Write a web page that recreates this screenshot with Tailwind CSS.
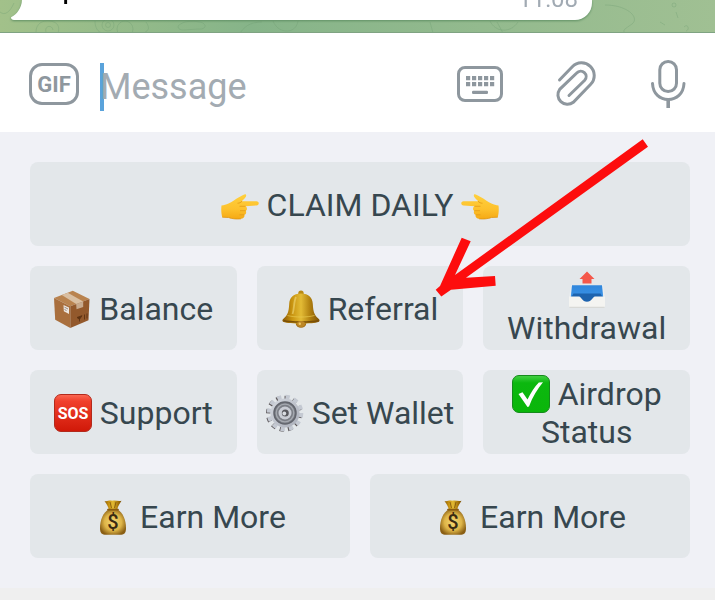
<!DOCTYPE html>
<html lang="en">
<head>
    <meta charset="UTF-8">
    <meta name="viewport" content="width=device-width, initial-scale=1.0">
    <title>Bot chat</title>
    <script src="https://cdn.jsdelivr.net/npm/@tailwindcss/browser@4"></script>
</head>
<body class="relative min-h-screen overflow-x-hidden bg-[#efefef] font-['Roboto',sans-serif]">

    <!-- Shared emoji drawings -->
    <svg class="absolute size-0" aria-hidden="true">
        <defs>
            <linearGradient id="skin" x1="0" y1="0" x2="0" y2="1"><stop offset="0" stop-color="#ffd03d"/><stop offset=".6" stop-color="#fdc12c"/><stop offset="1" stop-color="#f5a914"/></linearGradient>
            <linearGradient id="gold" x1="0" x2="1"><stop offset="0" stop-color="#8a5a08"/><stop offset=".25" stop-color="#c7920f"/><stop offset=".5" stop-color="#e3bb35"/><stop offset=".75" stop-color="#b07f0e"/><stop offset="1" stop-color="#7c5008"/></linearGradient>
            <linearGradient id="red" x1="0" y1="0" x2="0" y2="1"><stop offset="0" stop-color="#fb6a55"/><stop offset=".18" stop-color="#f0402c"/><stop offset="1" stop-color="#d01808"/></linearGradient>
            <linearGradient id="green" x1="0" y1="0" x2="0" y2="1"><stop offset="0" stop-color="#43d043"/><stop offset=".2" stop-color="#0cb80f"/><stop offset="1" stop-color="#0ab60a"/></linearGradient>
            <linearGradient id="blue" x1="0" y1="0" x2="0" y2="1"><stop offset="0" stop-color="#2f86dc"/><stop offset="1" stop-color="#3f97ea"/></linearGradient>
            <radialGradient id="bag" cx=".5" cy=".5" r=".55"><stop offset="0" stop-color="#f5d873"/><stop offset=".6" stop-color="#deb548"/><stop offset="1" stop-color="#8a5f14"/></radialGradient>
            <linearGradient id="steel" x1="0" y1="0" x2="1" y2="1"><stop offset="0" stop-color="#d5d9e0"/><stop offset="1" stop-color="#a9adb8"/></linearGradient>
        </defs>
        <symbol id="hand" viewBox="0 0 38 38">
            <path d="M.5 19.5C3 19 5 18.600 7.500 17.500C11 16 14 13.500 17.500 11.500C20 10.200 22.500 8.500 24 8.300C25.500 8.300 25.500 10 24.500 11.300C23.300 13 21.700 14.200 21 15.200L35.500 15.200C38.500 15.300 38.500 19.300 35.500 19.400L24.500 20.300C26.500 21.500 26.300 24 24.700 24.700C25.700 26.500 25 28.400 23.300 28.800C24 31 22.500 32.700 20 32.800C15 33.300 11 32.800 7.500 31.500L1.300 31.200C.2 28 0 23 .5 19.500Z" fill="url(#skin)"/>
            <path d="M24.500 20.300H18.500M24.700 24.700H19M23.300 28.800H18.500" fill="none" stroke="#e59a16" stroke-width=".8"/>
            <path d="M21 15.200C19.500 16.800 18 17.200 16.500 17.200M1.300 31.200L7.500 31.500C11 32.800 15 33.300 20 32.800" fill="none" stroke="#e09410" stroke-width=".8"/>
        </symbol>
        <symbol id="box" viewBox="0 0 38 38">
            <path d="M19.800 .8L1 8L17.300 16.200L36.500 9Z" fill="#b9834f"/>
            <path d="M1 8L17.300 16.200V38L2.200 29.700Z" fill="#a96f3d"/>
            <path d="M17.300 16.200L36.500 9L35.500 30.300L17.300 38Z" fill="#93592c"/>
            <path d="M8.800 5L14.800 2.700L30.200 11.400L23.200 14Z" fill="#d9bfa2"/>
            <path d="M23.200 14L30.200 11.400V17L23.500 19.200Z" fill="#c7aa8e"/>
            <path d="M10.500 15L16 17.600V24L10.800 21.300Z" fill="#ede6df"/>
            <path d="M11.500 17.200L15 19M11.500 19.500L13.500 20.500" stroke="#8d8078" stroke-width=".9"/>
            <path d="M24 27.500L29 25.700L26.500 29.300ZM26.500 29V31.500M31.500 24.500V29.500M34 23.500V28.500" fill="#5d3212" stroke="#5d3212" stroke-width=".9"/>
        </symbol>
        <symbol id="bell" viewBox="0 0 38 38">
            <circle cx="19" cy="3.300" r="2.700" fill="#b98a14"/>
            <ellipse cx="19" cy="33.500" rx="5.200" ry="4.300" fill="#a16c10"/>
            <path d="M19 3.500C27 3.500 30.500 8 30.800 14C31.200 22 32.500 25 36.300 28.500C38 30 38 31.200 36.500 32C31 34 7 34 1.500 32C0 31.200 0 30 1.700 28.500C5.500 25 6.800 22 7.200 14C7.500 8 11 3.500 19 3.500Z" fill="url(#gold)"/>
            <path d="M1.500 30.500C8 32.500 30 32.500 36.500 30.500" fill="none" stroke="#7a4f06" stroke-width="1.400"/>
            <path d="M5.500 25.500C13 27.500 25 27.500 32.500 25.500" fill="none" stroke="#e8c94f" stroke-width="1" opacity=".7"/>
            <path d="M14 7C11.500 12 12.500 19 10.500 24" fill="none" stroke="#f8e48a" stroke-width="1.800" opacity=".5"/>
            <ellipse cx="19" cy="34" rx="4" ry="3" fill="#bd8726"/>
            <circle cx="17.800" cy="33.700" r="1.200" fill="#f0ca66"/>
        </symbol>
        <symbol id="tray" viewBox="0 0 38 38">
            <path d="M19 .5L26.500 8H23.500V12.500H14.500V8H11.500Z" fill="#f4584b"/>
            <path d="M3 14.300H35L37 26H1Z" fill="#e9edf0"/>
            <path d="M4 14.300H34L35.300 27L25 31H13L2.700 27Z" fill="url(#blue)"/>
            <path d="M5.500 22.500H32.500L35.300 27L25 31H13L2.700 27Z" fill="#1d63ae"/>
            <path d="M1 25.500H11C13.500 25.700 14 30.700 19 30.700S24.500 25.700 27 25.500H37V35.300Q37 36.700 35.500 36.700H2.500Q1 36.700 1 35.300Z" fill="#f4f4f1"/>
            <path d="M1.500 36.300H36.500" stroke="#cfd0cc" stroke-width=".9"/>
        </symbol>
        <symbol id="sos" viewBox="0 0 38 38">
            <rect x=".5" y=".5" width="37" height="37" rx="6.500" fill="url(#red)" stroke="#b32a1c"/>
        </symbol>
        <symbol id="gear" viewBox="0 0 38 38">
            <circle cx="18" cy="19.700" r="15.800" fill="none" stroke="#5f5a5c" stroke-width="4.500" stroke-dasharray="4.140 4.140"/>
            <circle cx="19" cy="19" r="15.800" fill="none" stroke="#c4c9d2" stroke-width="5" stroke-dasharray="4.140 4.140"/>
            <circle cx="19" cy="19" r="14.500" fill="url(#steel)"/>
            <circle cx="19" cy="19" r="11" fill="#7b7e86" stroke="#62656d" stroke-width="1.500"/>
            <circle cx="19" cy="19" r="8.800" fill="none" stroke="#a5a9b0" stroke-width="1.300"/>
            <circle cx="19" cy="19" r="6.500" fill="#c9ccd4"/>
            <circle cx="19.300" cy="19" r="3.500" fill="#58585e"/>
            <circle cx="18.300" cy="19.500" r="1.900" fill="#d9dce1"/>
        </symbol>
        <symbol id="check" viewBox="0 0 38 38">
            <rect x=".5" y=".5" width="37" height="37" rx="6.500" fill="url(#green)" stroke="#158a1b"/>
            <path d="M6.500 19L10.500 17.300L15.500 24.500C19 17.500 22.500 12 26.800 7.500L31 7.300C25.500 14 20.500 22 17 31.500L15.500 32Z" fill="#fff"/>
        </symbol>
        <symbol id="money" viewBox="0 0 38 38">
            <path d="M10.500 3C13 4 15 2 18 2.800C21 1.800 24 3.500 27.500 2.700C25 6.500 23.500 9 23.300 12H14.800C14.500 9 13 6.500 10.500 3Z" fill="url(#gold)"/>
            <path d="M14.800 11.500H23.300C29 14.500 32 22 32 30C32 35.500 30 36.800 26 36.800H12C8 36.800 6 35.500 6 30C6 22 9 14.500 14.800 11.500Z" fill="url(#bag)"/>
            <path d="M14 11.700H24" stroke="#8a5c10" stroke-width="1.800" stroke-linecap="round"/>
            <path d="M16 4L17.500 10M22 4L20.500 10" stroke="#7a500b" stroke-width=".8"/>
        </symbol>
    </svg>

    <!-- Bottom edge of the chat -->
    <div class="relative h-[33px] overflow-hidden border-b border-[#7fa382] bg-linear-to-r from-[#a2c18a] via-[#86b489] via-35% to-[#a0c093] pr-[123px] pl-[11px]">
        <svg class="absolute inset-0 h-full w-full" fill="none" stroke="#6f9f72" stroke-opacity=".35" aria-hidden="true">
            <path d="M0 12C5 16 10 12 14 3M36 32C36 24 42 20 50 21C58 22 60 27 58 33M46 32C44 26 52 24 53 30M95 21C95 28 98 32 102 33M146 22C150 28 149 30 144 33M178 26C184 20 194 21 200 22C208 24 206 30 198 29L184 30C180 30 178 29 178 26M240 33C246 24 254 22 262 22M273 21C276 28 281 31 287 31C293 31 297 27 298 21M490 21C495 32 510 34 518 22M605 5C628 5 640 18 632 24C625 29 622 30 625 33M660 22L665 25M676 12L678 18M684 27C688 23 690 30 686 31M430 22L433 33M497 22L503 33"/>
            <circle cx="108" cy="25" r="6"/><circle cx="108" cy="25" r="2.500"/><circle cx="125" cy="29" r="8"/><circle cx="674" cy="5" r="2"/>
        </svg>
        <div class="relative flex h-5 drop-shadow-[0_1px_1px_#5f8f63]">
            <svg class="h-5 w-[11px] shrink-0" viewBox="0 0 11 20" aria-hidden="true"><path d="M11 0C10.500 8 6 14.500 0 17.300Q0 20 3 20H11Z" fill="#fff"/></svg>
            <div class="flex flex-1 items-end justify-between rounded-br-[17px] bg-white pr-[14px] pl-10">
                <span class="mb-[17px] text-[32px] leading-none text-black">p</span>
                <time class="mb-[9px] text-[24px] leading-none text-[#a1aab3]">11:08</time>
            </div>
        </div>
    </div>

    <!-- Composer -->
    <form class="flex h-[99px] items-center bg-white pt-[3px] pr-[25px] pl-[29px] text-[#8e979e]">
        <button type="button" class="flex h-[42px] w-[50px] shrink-0 items-center justify-center rounded-[13px] border-3 border-current pt-0.5 text-[22px] leading-none font-bold">GIF</button>
        <div class="ml-[21px] flex min-w-0 flex-1 items-center pt-1.5">
            <span class="h-12 w-1 shrink-0 bg-[#5aa3db]"></span>
            <input type="text" aria-label="Message" placeholder="Message" class="-ml-1 h-12 w-full min-w-0 bg-transparent text-[36px] text-[#37474f] outline-none placeholder:text-[#a3abb2]">
        </div>
        <div class="flex shrink-0 gap-12">
            <button type="button" aria-label="Keyboard">
                <svg class="h-12 w-12" viewBox="0 0 48 48" fill="currentColor">
                    <rect x="2.500" y="7.500" width="43" height="33" rx="6.500" fill="none" stroke="currentColor" stroke-width="3"/>
                    <path d="M10 16h4.200v4.200h-4.200zM16 16h4.200v4.200h-4.200zM22 16h4.200v4.200h-4.200zM28 16h4.200v4.200h-4.200zM34 16h4.200v4.200h-4.200zM10 22h4.200v4.200h-4.200zM16 22h4.200v4.200h-4.200zM22 22h4.200v4.200h-4.200zM28 22h4.200v4.200h-4.200zM34 22h4.200v4.200h-4.200z"/>
                    <rect x="16" y="30.700" width="16" height="3.200" rx="1.200"/>
                </svg>
            </button>
            <button type="button" aria-label="Attach">
                <svg class="h-12 w-12" viewBox="0 0 48 48" fill="none" stroke="currentColor" stroke-width="3" stroke-linecap="round">
                    <path d="M7.500 20L20.300 6.700A12.700 12.700 0 0 1 38.700 24.300L21.300 42.300A9.500 9.500 0 0 1 7.700 29.300L24.700 13A5.400 5.400 0 0 1 32.700 20.300L17 35.500"/>
                </svg>
            </button>
            <button type="button" aria-label="Record voice">
                <svg class="h-12 w-[42px]" viewBox="0 0 42 48" fill="none" stroke="currentColor" stroke-width="3">
                    <rect x="11.800" y="1.500" width="16.700" height="30" rx="8.300"/>
                    <path d="M4.500 23.500C5 34 12 39.500 20.200 39.500S35.400 34 36 23.500" stroke-linecap="round"/>
                    <path d="M20.200 39.500V48" stroke-width="3.600"/>
                </svg>
            </button>
        </div>
    </form>

    <!-- Reply keyboard -->
    <main class="grid grid-cols-6 gap-5 bg-[#f0f1f6] pt-[30px] pr-[25px] pb-[30px] pl-[30px] text-[32px] leading-[38px] text-[#37474f]">
        <button type="button" class="col-span-6 min-h-[84px] rounded-lg bg-[#e3e7ea] px-2 pt-0.5">
            <svg class="inline size-[38px] align-bottom"><use href="#hand"/></svg>
            CLAIM DAILY
            <svg class="inline size-[38px] -scale-x-100 align-bottom"><use href="#hand"/></svg>
        </button>
        <button type="button" class="col-span-2 min-h-[84px] rounded-lg bg-[#e3e7ea] px-2 pt-0.5">
            <svg class="inline size-[38px] align-bottom"><use href="#box"/></svg>
            Balance
        </button>
        <button type="button" class="col-span-2 min-h-[84px] rounded-lg bg-[#e3e7ea] px-2 pt-0.5">
            <svg class="inline size-[38px] align-bottom"><use href="#bell"/></svg>
            Referral
        </button>
        <button type="button" class="col-span-2 min-h-[84px] rounded-lg bg-[#e3e7ea] px-2 pt-0.5">
            <svg class="inline size-[38px] align-bottom"><use href="#tray"/></svg>
            Withdrawal
        </button>
        <button type="button" class="col-span-2 min-h-[84px] rounded-lg bg-[#e3e7ea] px-2 pt-0.5">
            <svg class="inline size-[38px] align-bottom">
                <use href="#sos"/>
                <text x="19" y="25" text-anchor="middle" font-weight="700" font-size="16" fill="#fff">SOS</text>
            </svg>
            Support
        </button>
        <button type="button" class="col-span-2 min-h-[84px] rounded-lg bg-[#e3e7ea] px-2 pt-0.5">
            <svg class="inline size-[38px] align-bottom"><use href="#gear"/></svg>
            Set Wallet
        </button>
        <button type="button" class="col-span-2 min-h-[84px] rounded-lg bg-[#e3e7ea] px-2 pt-0.5">
            <svg class="inline size-[38px] align-bottom"><use href="#check"/></svg>
            Airdrop Status
        </button>
        <button type="button" class="col-span-3 min-h-[84px] rounded-lg bg-[#e3e7ea] px-2 pt-0.5">
            <svg class="inline size-[38px] align-bottom">
                <use href="#money"/>
                <text x="19" y="31" text-anchor="middle" font-weight="500" font-size="20" fill="#3a2a12">$</text>
            </svg>
            Earn More
        </button>
        <button type="button" class="col-span-3 min-h-[84px] rounded-lg bg-[#e3e7ea] px-2 pt-0.5">
            <svg class="inline size-[38px] align-bottom">
                <use href="#money"/>
                <text x="19" y="31" text-anchor="middle" font-weight="500" font-size="20" fill="#3a2a12">$</text>
            </svg>
            Earn More
        </button>
    </main>

    <!-- Arrow pointing at Referral -->
    <svg class="pointer-events-none absolute top-[136px] left-[434px] h-[164px] w-[216px]" viewBox="434 136 216 164" aria-hidden="true">
        <path d="M642.700 139.300L648 146.700L466 277.700L495 276L495.700 285.700L451 289.800L441.300 296.500L435.700 289.700L440 286L461.700 237.700L470.700 241.300L455 275Z" fill="#fd0d0d"/>
    </svg>
</body>
</html>
